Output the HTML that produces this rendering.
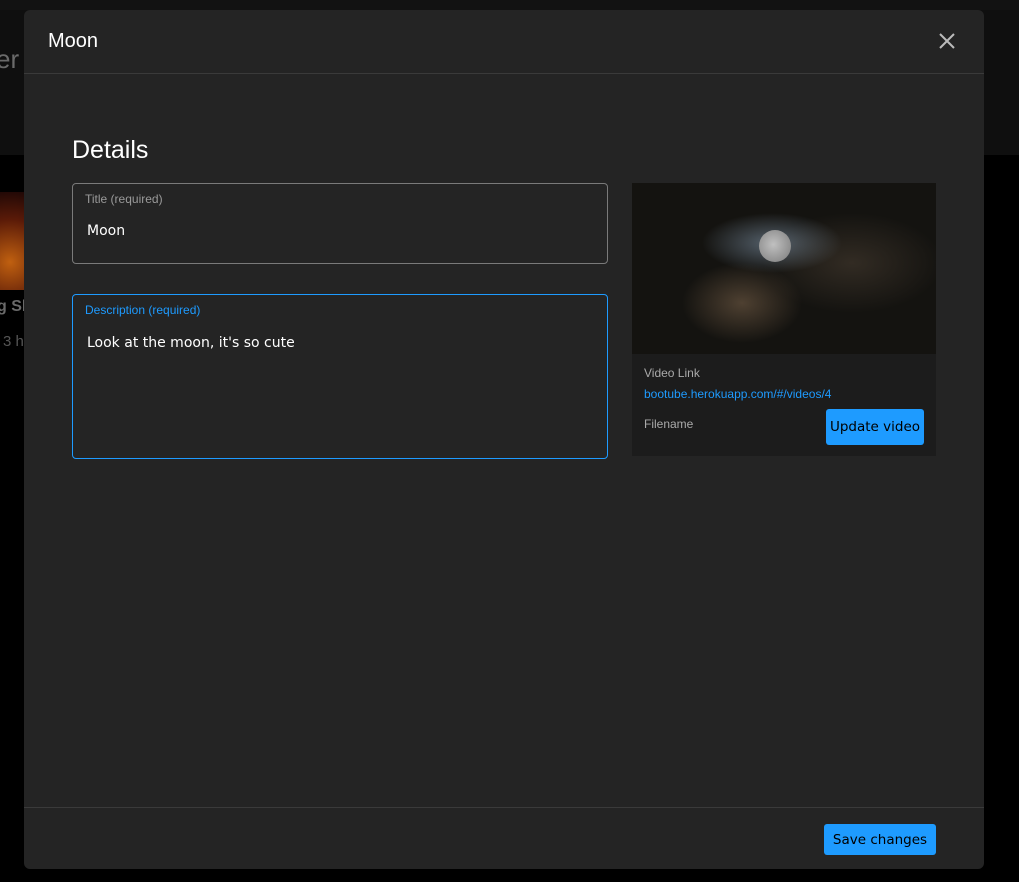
<!DOCTYPE html>
<html><head><style>
body{margin:0;width:1019px;height:882px;background:#000;position:relative;overflow:hidden;font-family:"Liberation Sans",sans-serif;}
.hdr{position:absolute;left:0;top:0;width:1019px;height:155px;background:#0f0f0f;}
.top{position:absolute;left:0;top:0;width:1019px;height:10px;background:#121212;}
.er{position:absolute;left:-4px;top:44px;font-size:26px;color:#6a6a6a;}
.thumb{position:absolute;left:0;top:192px;width:24px;height:98px;background:radial-gradient(circle at 10px 70px,#c06010,#5a1a08 60%,#200806);}
.sk{position:absolute;left:-3px;top:298px;font-size:16px;font-weight:bold;color:#6a6a6a;}
.h3{position:absolute;left:3px;top:333px;font-size:15px;color:#555;}
.modal{position:absolute;left:24px;top:10px;width:960px;height:859px;background:#242424;border-radius:6px;overflow:hidden;}
.mt{position:absolute;left:24px;top:20px;font-size:20px;color:#fff;}
.x{position:absolute;left:914px;top:22px;}
.line1{position:absolute;left:0;top:63px;width:960px;height:1px;background:#3a3a3a;}
.line2{position:absolute;left:0;top:797px;width:960px;height:1px;background:#3a3a3a;}
.det{position:absolute;left:48px;top:126px;font-size:25px;color:#fff;}
.f{position:absolute;left:48px;width:534px;border:1px solid #7a7a7a;border-radius:4px;}
.f .l{position:absolute;left:12px;top:8px;font-size:12px;color:#9a9a9a;}
.f .v{position:absolute;left:14px;font-size:14px;color:#fff;font-family:"DejaVu Sans",sans-serif;}
.card{position:absolute;left:608px;top:173px;width:304px;height:273px;background:#1c1c1c;}
.img{width:304px;height:171px;background:radial-gradient(ellipse 70px 30px at 140px 60px,rgba(150,175,200,.5),transparent),radial-gradient(ellipse 60px 40px at 110px 120px,rgba(150,120,90,.45),transparent),radial-gradient(ellipse 90px 50px at 220px 80px,rgba(120,100,80,.3),transparent),#141310;position:relative;}
.moon{position:absolute;left:127px;top:47px;width:32px;height:32px;border-radius:50%;background:radial-gradient(circle at 45% 45%,#c0c0c0,#7a7a7a);}
.btn{position:absolute;background:#1e9bff;color:#000;border-radius:3px;font-family:"DejaVu Sans",sans-serif;font-size:13.5px;text-align:center;}
</style></head><body>
<div class="hdr"></div><div class="top"></div>
<div class="er">er</div><div class="thumb"></div><div class="sk">g Sk</div><div class="h3">3 h</div>
<div class="modal">
<div class="mt">Moon</div>
<svg class="x" width="18" height="18" viewBox="0 0 18 18"><path d="M2 2L16 16M16 2L2 16" stroke="#bbb" stroke-width="2"/></svg>
<div class="line1"></div>
<div class="det">Details</div>
<div class="f" style="top:173px;height:79px"><div class="l">Title (required)</div><div class="v" style="top:39px">Moon</div></div>
<div class="f" style="top:284px;height:163px;border-color:#1e9bff"><div class="l" style="color:#1e9bff">Description (required)</div><div class="v" style="top:40px">Look at the moon, it's so cute</div></div>
<div class="card"><div class="img"><div class="moon"></div></div>
<div style="position:absolute;left:12px;top:183px;font-size:12px;color:#aaa">Video Link</div>
<div style="position:absolute;left:12px;top:204px;font-size:12px;color:#1e9bff">bootube.herokuapp.com/#/videos/4</div>
<div style="position:absolute;left:12px;top:234px;font-size:12px;color:#aaa">Filename</div>
<div class="btn" style="left:194px;top:226px;width:98px;height:36px;line-height:37px">Update video</div>
</div>
<div class="line2"></div>
<div class="btn" style="left:800px;top:814px;width:112px;height:31px;line-height:32px">Save changes</div>
</div>
</body></html>
